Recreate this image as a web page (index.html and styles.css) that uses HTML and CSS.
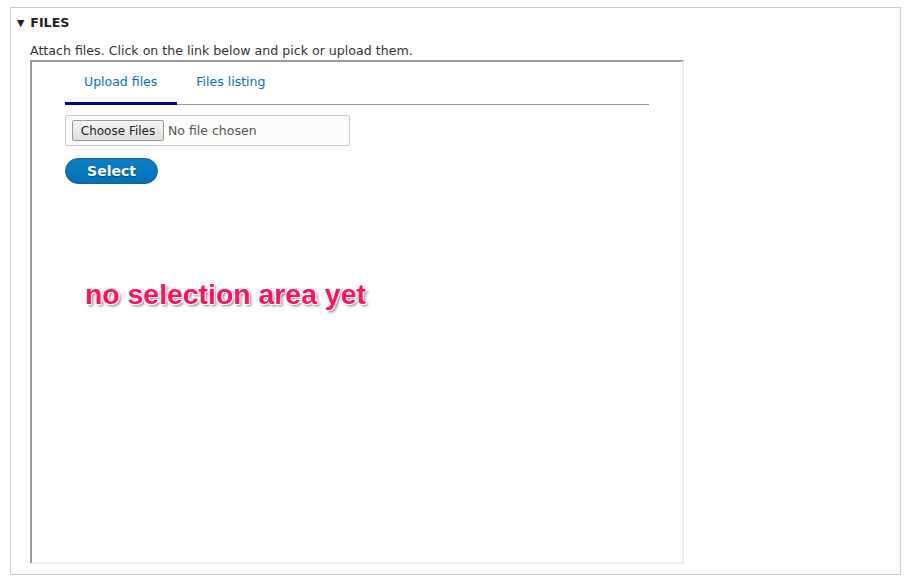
FILE: index.html
```html
<!DOCTYPE html>
<html lang="en">
<head>
<meta charset="utf-8">
<title>Files</title>
<link rel="stylesheet" href="styles.css">
</head>
<body>
<div class="panel">
  <div class="panel-title"><span class="arrow">&#9660;</span>FILES</div>
  <div class="panel-body">
    <div class="description">Attach files. Click on the link below and pick or upload them.</div>
    <div class="frame">
      <div class="tabs">
        <a class="tab active">Upload files</a>
        <a class="tab">Files listing</a>
      </div>
      <div class="file-box">
        <span class="choose">Choose Files</span>
        <span class="no-file">No file chosen</span>
      </div>
      <button class="select-btn">Select</button>
      <div class="note">no selection area yet</div>
    </div>
  </div>
</div>
</body>
</html>
```

FILE: styles.css
```css
html, body {
  margin: 0;
  padding: 0;
  background: #fff;
}
body {
  font-family: "DejaVu Sans", sans-serif;
  color: #333;
}
.panel {
  box-sizing: border-box;
  margin: 7px 0 0 10px;
  width: 891px;
  height: 568px;
  border: 1px solid #ccc;
}
.panel-title {
  padding: 7px 0 0 6px;
  height: 16px;
  line-height: 16px;
  font-size: 12.6px;
  font-weight: bold;
  color: #222;
}
.arrow {
  font-size: 9.5px;
  margin-right: 6px;
  vertical-align: 1px;
}
.panel-body {
  padding-left: 19px;
}
.description {
  margin: 13px 0 2px;
  line-height: 14px;
  font-size: 12.6px;
  color: #333;
}
.frame {
  box-sizing: border-box;
  width: 654px;
  height: 504px;
  border-top: 2px solid #9a9a9a;
  border-left: 2px solid #9a9a9a;
  border-right: 2px solid #eeeeee;
  border-bottom: 2px solid #eeeeee;
  padding-left: 33px;
}
.tabs {
  display: flex;
  width: 584px;
  border-bottom: 1px solid #999;
}
.tab {
  display: block;
  padding: 11px 20px 11px 19px;
  line-height: 18px;
  font-size: 12.5px;
  color: #0074bd;
  margin-bottom: -1px;
  border-bottom: 3px solid transparent;
}
.tab.active {
  border-bottom-color: #000099;
}
.file-box {
  box-sizing: border-box;
  display: flex;
  align-items: center;
  margin-top: 10px;
  width: 285px;
  height: 31px;
  padding-left: 6px;
  border: 1px solid #ccc;
  border-radius: 2px;
  background: #fcfcfa;
}
.choose {
  box-sizing: border-box;
  width: 92px;
  height: 21px;
  line-height: 20px;
  text-align: center;
  font-size: 12px;
  color: #222;
  border: 1px solid #999;
  border-radius: 2px;
  background: linear-gradient(#f6f6f6, #dedede);
}
.no-file {
  margin-left: 4px;
  font-size: 12.5px;
  color: #555;
}
.select-btn {
  display: block;
  box-sizing: border-box;
  margin-top: 12px;
  width: 93px;
  height: 26px;
  padding: 0;
  border: 1px solid #1e5c90;
  border-radius: 13px;
  background: linear-gradient(#0a80c8, #0071b8);
  color: #fff;
  font-family: "DejaVu Sans", sans-serif;
  font-size: 14px;
  font-weight: bold;
  text-shadow: 0 1px 1px rgba(0, 0, 0, 0.4);
}
.note {
  margin: 94px 0 0 20px;
  line-height: 32px;
  font-family: "Liberation Sans", Arial, sans-serif;
  font-size: 28.4px;
  font-weight: bold;
  color: #ff1160;
  text-shadow: -1px -1px 0 #fff, 1px -1px 0 #fff, -1px 1px 0 #fff, 1px 1px 0 #fff, 2px 2px 3px rgba(0, 0, 0, 0.55);
}
```
